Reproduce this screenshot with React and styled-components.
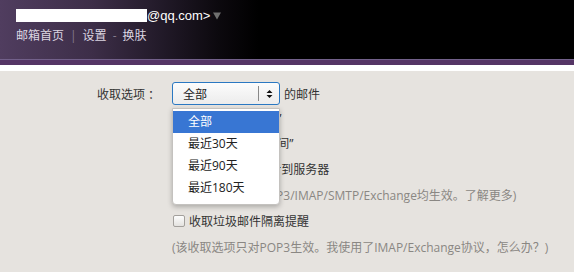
import React from "react";
import styled, { createGlobalStyle } from "styled-components";

const GlobalStyle = createGlobalStyle`
  html, body { margin: 0; padding: 0; }
  body {
    background: #e6e3df;
    font-family: "Open Sans", "Noto Sans CJK SC", sans-serif;
    font-size: 12px;
    color: #333;
  }
`;

const Page = styled.div`
  position: relative;
  width: 574px;
  height: 272px;
  overflow: hidden;
  background: #e6e3df;
`;

const Header = styled.header`
  height: 59px;
  box-sizing: border-box;
  padding: 8px 0 0 16px;
  background: linear-gradient(90deg, #503d5f 0%, #3d2e48 16%, #221a29 28%, #0c090e 38%, #000 45%, #000 100%);
  display: flex;
  flex-direction: column;
  gap: 4px;
`;

const Band = styled.div`
  height: 6px;
  background: #553565;
  border-top: 1px solid #72608a;
  box-sizing: border-box;
`;

const WhiteStrip = styled.div`
  height: 6px;
  background: #fff;
`;

const AccountLine = styled.div`
  display: flex;
  align-items: center;
  height: 14px;
  font-family: "Liberation Sans", Arial, sans-serif;
  font-size: 13px;
  color: #fff;
`;

const Redacted = styled.span`
  display: inline-block;
  width: 131px;
  height: 13px;
  background: #fff;
`;

const Caret = styled.svg`
  margin-left: 3px;
  margin-top: 1px;
`;

const NavLine = styled.nav`
  display: flex;
  align-items: center;
  gap: 6px;
  height: 18px;
  color: #dcd6e2;
  font-size: 12px;
`;

const Sep = styled.span`
  color: #857b8d;
`;

const Form = styled.div`
  display: grid;
  grid-template-columns: 172px 1fr;
  padding-top: 11px;
`;

const Label = styled.div`
  text-align: right;
  padding-right: 12px;
  height: 23px;
  line-height: 25px;
  color: #333;
  white-space: nowrap;
`;

const Controls = styled.div`
  display: flex;
  flex-direction: column;
`;

const SelectRow = styled.div`
  display: flex;
  align-items: center;
  height: 23px;
  gap: 4px;
`;

const SelectBox = styled.div`
  box-sizing: border-box;
  width: 108px;
  height: 23px;
  border: 1px solid #2a78c2;
  border-radius: 3px;
  background: linear-gradient(#fcfcfc, #ececec);
  display: flex;
  align-items: center;
  padding-left: 10px;
  color: #222;
`;

const SelectText = styled.span`
  flex: 1;
`;

const Divider = styled.span`
  width: 1px;
  height: 15px;
  background: #888;
`;

const Arrows = styled.span`
  width: 20px;
  display: flex;
  justify-content: center;
`;

const Line = styled.div`
  display: flex;
  align-items: center;
  height: ${(p) => p.$h || 26}px;
  gap: 4px;
  color: ${(p) => (p.$muted ? "#8a8783" : "#333")};
  white-space: nowrap;
`;

const Check = styled.span`
  box-sizing: border-box;
  width: 12px;
  height: 12px;
  margin-left: 1px;
  border: 1px solid #a3a09c;
  border-radius: 2px;
  background: linear-gradient(#fdfdfd, #e4e2df);
`;

const Menu = styled.ul`
  position: absolute;
  left: 172px;
  top: 108px;
  width: 108px;
  box-sizing: border-box;
  margin: 0;
  padding: 2px 0 5px;
  list-style: none;
  background: #fff;
  border: 1px solid #c4c2bf;
  border-radius: 0 0 4px 4px;
  box-shadow: 0 2px 5px rgba(0, 0, 0, 0.25);
`;

const MenuItem = styled.li`
  height: 22px;
  line-height: 22px;
  padding-left: 15px;
  background: ${(p) => (p.$active ? "#3876d3" : "transparent")};
  color: ${(p) => (p.$active ? "#fff" : "#222")};
`;

const options = ["全部", "最近30天", "最近90天", "最近180天"];

export default function App() {
  return (
    <Page>
      <GlobalStyle />
      <Header>
        <AccountLine>
          <Redacted />
          @qq.com&gt;
          <Caret width="8" height="8" viewBox="0 0 8 8">
            <path d="M0 0.5 H8 L4 7.5 Z" fill="#6f6f6f" />
          </Caret>
        </AccountLine>
        <NavLine>
          <span>邮箱首页</span>
          <Sep>|</Sep>
          <span>设置</span>
          <Sep>-</Sep>
          <span>换肤</span>
        </NavLine>
      </Header>
      <Band />
      <WhiteStrip />
      <Form>
        <Label>收取选项 ：</Label>
        <Controls>
          <SelectRow>
            <SelectBox>
              <SelectText>全部</SelectText>
              <Divider />
              <Arrows>
                <svg width="7" height="10" viewBox="0 0 7 10">
                  <path d="M3.5 1 L6.5 4 H0.5 Z M3.5 9 L0.5 6 H6.5 Z" fill="#111" />
                </svg>
              </Arrows>
            </SelectBox>
            <span>的邮件</span>
          </SelectRow>
          <Line $h={25}>
            <Check />
            <span>收取“我的文件夹”</span>
          </Line>
          <Line>
            <Check />
            <span>收取“最近一段时间”</span>
          </Line>
          <Line>
            <Check />
            <span>将“已读”状态同步到服务器</span>
          </Line>
          <Line $muted>(此收取设置对于POP3/IMAP/SMTP/Exchange均生效。了解更多)</Line>
          <Line>
            <Check />
            <span>收取垃圾邮件隔离提醒</span>
          </Line>
          <Line $muted>(该收取选项只对POP3生效。我使用了IMAP/Exchange协议，怎么办？)</Line>
        </Controls>
      </Form>
      <Menu>
        {options.map((o, i) => (
          <MenuItem key={o} $active={i === 0}>
            {o}
          </MenuItem>
        ))}
      </Menu>
    </Page>
  );
}
